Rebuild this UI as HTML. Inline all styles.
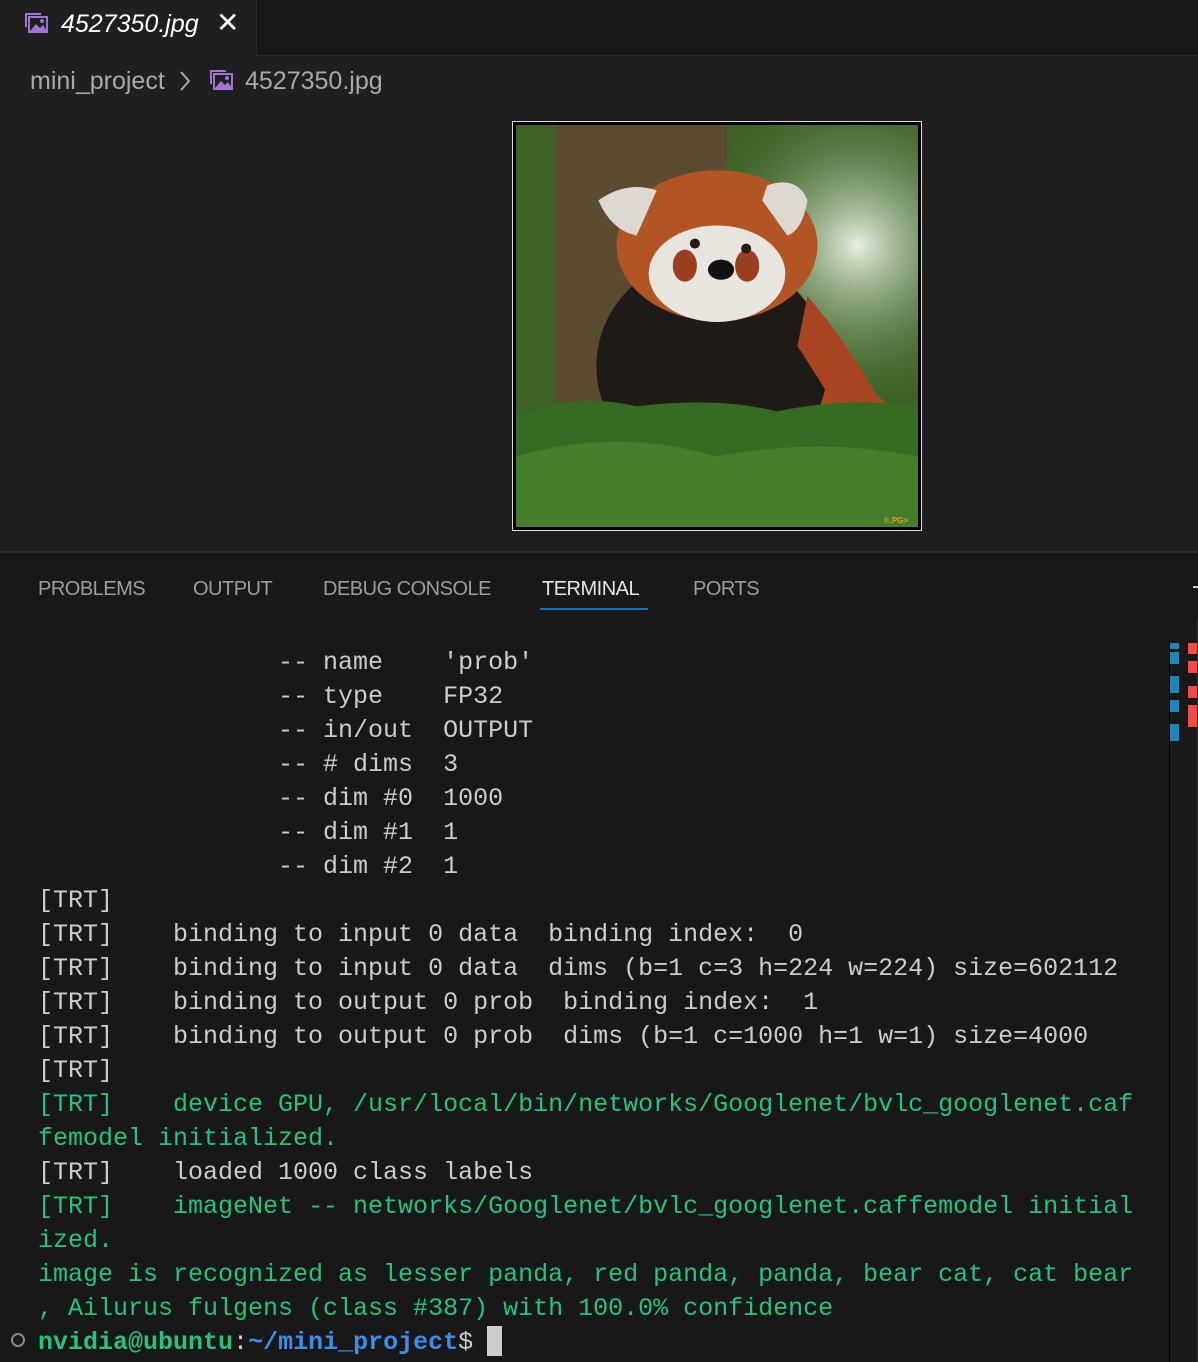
<!DOCTYPE html>
<html><head><meta charset="utf-8"><style>
*{margin:0;padding:0;box-sizing:border-box}
body{width:1198px;height:1362px;background:#1f1f1f;position:relative;overflow:hidden;font-family:"Liberation Sans",sans-serif}
.abs{position:absolute}
.tabbar{left:0;top:0;width:1198px;height:56px;background:#181818;border-bottom:1px solid #2b2b2b}
.tab{left:0;top:0;width:257px;height:56px;background:#1f1f1f;border-right:1px solid #2b2b2b}
.panel{left:0;top:551px;width:1198px;height:811px;background:#181818;border-top:2px solid #2b2b2b}
.ptab{top:578px;font-size:20px;color:#9d9d9d;letter-spacing:-0.5px}
pre{font-family:"Liberation Mono",monospace;font-size:25px;line-height:34px;color:#cccccc;position:absolute;left:38px;top:646px;margin:0}
.g{color:#23c383}.b{color:#3b8eea;font-weight:bold}.gb{color:#23c383;font-weight:bold}
</style></head><body>
<div class="abs tabbar"></div>
<div class="abs tab"></div>
<svg class="abs" style="left:24px;top:11px" width="26" height="24" viewBox="0 0 26 24"><path d="M1 2h16v2H3v12H1z" fill="#a174d0"/><rect x="5" y="6" width="18" height="15" fill="none" stroke="#a174d0" stroke-width="2"/><path d="M6 20l6-7 4 4 3-3 4 6z" fill="#a174d0"/><circle cx="18" cy="10" r="2" fill="#a174d0"/></svg>
<div class="abs" style="left:61px;top:10px;font-size:25px;font-style:italic;color:#fff">4527350.jpg</div>
<div class="abs" style="left:216px;top:6px;font-size:28px;color:#fff">✕</div>
<div class="abs" style="left:30px;top:67px;font-size:25px;color:#a9a9a9">mini_project</div>
<svg class="abs" style="left:178px;top:70px" width="14" height="22"><path d="M3 2l8 9-8 9" stroke="#a9a9a9" stroke-width="2" fill="none"/></svg>
<svg class="abs" style="left:209px;top:68px" width="26" height="24" viewBox="0 0 26 24"><path d="M1 2h16v2H3v12H1z" fill="#a174d0"/><rect x="5" y="6" width="18" height="15" fill="none" stroke="#a174d0" stroke-width="2"/><path d="M6 20l6-7 4 4 3-3 4 6z" fill="#a174d0"/><circle cx="18" cy="10" r="2" fill="#a174d0"/></svg>
<div class="abs" style="left:245px;top:67px;font-size:25px;color:#a9a9a9">4527350.jpg</div>

<div class="abs" style="left:512px;top:121px;width:410px;height:410px;background:#000;border:1px solid #ddd;padding:3px">
<svg width="402" height="402" viewBox="0 0 400 400">
<defs><radialGradient id="sky" cx="0.85" cy="0.3" r="0.4"><stop offset="0" stop-color="#e8eee0"/><stop offset="1" stop-color="#4a7a3a" stop-opacity="0"/></radialGradient></defs>
<rect width="400" height="400" fill="#3f6128"/>
<rect x="40" y="0" width="170" height="300" fill="#5a4a30"/>
<rect width="400" height="400" fill="url(#sky)"/>
<path d="M260 260 Q350 240 390 300 L390 330 L260 330z" fill="#a84a20"/>
<ellipse cx="195" cy="240" rx="115" ry="110" fill="#1d1a18"/>
<path d="M290 170 Q340 230 370 290 L330 300 Q300 250 280 220z" fill="#a84520"/>
<ellipse cx="200" cy="120" rx="100" ry="75" fill="#b25424"/>
<path d="M82 75 Q110 55 140 65 L120 110 Q95 105 82 75z" fill="#ddd8d0"/>
<path d="M250 60 Q280 50 290 75 Q285 105 270 110 L245 75z" fill="#ddd8d0"/>
<ellipse cx="200" cy="148" rx="68" ry="48" fill="#e8e4de"/>
<ellipse cx="168" cy="140" rx="12" ry="16" fill="#9a4020"/>
<ellipse cx="230" cy="140" rx="12" ry="16" fill="#9a4020"/>
<circle cx="178" cy="118" r="5" fill="#2a1a10"/><circle cx="229" cy="123" r="5" fill="#2a1a10"/>
<ellipse cx="204" cy="144" rx="13" ry="10" fill="#111"/>
<path d="M0 290 Q60 265 120 280 Q200 270 260 285 Q330 270 400 280 L400 400 L0 400z" fill="#356b22"/>
<path d="M0 330 Q100 300 200 330 Q300 310 400 330 L400 400 L0 400z" fill="#447e2c"/>
<text x="366" y="396" font-size="8" fill="#e5a01a" font-family="Liberation Sans" font-weight="bold">©.PG&gt;</text>
</svg></div>

<div class="abs panel"></div>
<div class="abs ptab" style="left:38px">PROBLEMS</div>
<div class="abs ptab" style="left:193px">OUTPUT</div>
<div class="abs ptab" style="left:323px">DEBUG CONSOLE</div>
<div class="abs ptab" style="left:542px;color:#e7e7e7">TERMINAL</div>
<div class="abs" style="left:540px;top:608px;width:108px;height:2px;background:#0078d4"></div>
<div class="abs ptab" style="left:693px">PORTS</div>
<div class="abs" style="left:1193px;top:586px;width:5px;height:2px;background:#ccc"></div>

<pre>                -- name    'prob'
                -- type    FP32
                -- in/out  OUTPUT
                -- # dims  3
                -- dim #0  1000
                -- dim #1  1
                -- dim #2  1
[TRT]
[TRT]    binding to input 0 data  binding index:  0
[TRT]    binding to input 0 data  dims (b=1 c=3 h=224 w=224) size=602112
[TRT]    binding to output 0 prob  binding index:  1
[TRT]    binding to output 0 prob  dims (b=1 c=1000 h=1 w=1) size=4000
[TRT]
<span class="g">[TRT]    device GPU, /usr/local/bin/networks/Googlenet/bvlc_googlenet.caf
femodel initialized.</span>
[TRT]    loaded 1000 class labels
<span class="g">[TRT]    imageNet -- networks/Googlenet/bvlc_googlenet.caffemodel initial
ized.
image is recognized as lesser panda, red panda, panda, bear cat, cat bear
, Ailurus fulgens (class #387) with 100.0% confidence</span>
<span class="gb">nvidia@ubuntu</span>:<span class="b">~/mini_project</span>$ </pre>
<div class="abs" style="left:487px;top:1326px;width:15px;height:30px;background:#ccc"></div>
<div class="abs" style="left:11px;top:1333px;width:14px;height:14px;border:2px solid #888;border-radius:50%"></div>

<div class="abs" style="left:1169px;top:643px;width:1px;height:719px;background:#000"></div>
<div class="abs" style="left:1170px;top:643px;width:9px;height:6px;background:#1e86b8"></div>
<div class="abs" style="left:1170px;top:652px;width:9px;height:12px;background:#1e86b8"></div>
<div class="abs" style="left:1170px;top:676px;width:9px;height:17px;background:#1e86b8"></div>
<div class="abs" style="left:1170px;top:700px;width:9px;height:12px;background:#1e86b8"></div>
<div class="abs" style="left:1170px;top:724px;width:9px;height:17px;background:#1e86b8"></div>
<div class="abs" style="left:1188px;top:643px;width:9px;height:11px;background:#f14c4c"></div>
<div class="abs" style="left:1188px;top:661px;width:9px;height:12px;background:#f14c4c"></div>
<div class="abs" style="left:1188px;top:686px;width:9px;height:12px;background:#f14c4c"></div>
<div class="abs" style="left:1188px;top:705px;width:9px;height:22px;background:#f14c4c"></div>
<div class="abs" style="left:1197px;top:620px;width:1px;height:742px;background:#333"></div>
</body></html>
